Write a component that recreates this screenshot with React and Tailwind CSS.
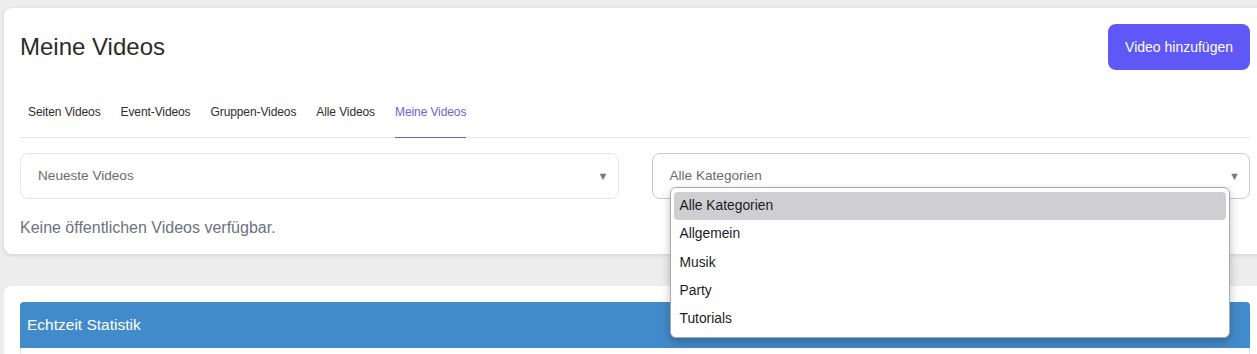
import { useState } from "react";

const tabs = ["Seiten Videos", "Event-Videos", "Gruppen-Videos", "Alle Videos", "Meine Videos"];
const categories = ["Alle Kategorien", "Allgemein", "Musik", "Party", "Tutorials"];

export default function App() {
  const [active] = useState("Meine Videos");

  return (
    <div
      className="h-[354px] bg-[#ededed] overflow-hidden pt-2 pl-1"
      style={{ fontFamily: '"Liberation Sans", Arial, sans-serif' }}
    >
      {/* Videos card */}
      <div className="w-[1262px] bg-white rounded-lg shadow-[0_1px_4px_rgba(0,0,0,0.12)] px-4 pt-4 pb-[17px]">
        {/* Header */}
        <div className="flex items-center justify-between h-[46px]">
          <h1 className="text-[24px] text-[#2b2b2b] leading-none">Meine Videos</h1>
          <button className="h-[46px] px-[17px] rounded-lg bg-[#5f58f6] text-white text-[14px]">
            Video hinzufügen
          </button>
        </div>

        {/* Tabs */}
        <div className="mt-[17px] flex gap-5 pl-2 border-b border-[#e6e6e6]">
          {tabs.map((t) => (
            <div
              key={t}
              className={
                t === active
                  ? "py-4 text-[12px] tracking-[-0.1px] leading-[18px] text-[#6a62d8] border-b border-[#6a5fcc] -mb-px"
                  : "py-4 text-[12px] tracking-[-0.1px] leading-[18px] text-[#2e2e2e]"
              }
            >
              {t}
            </div>
          ))}
        </div>

        {/* Filters */}
        <div className="mt-[15px] grid grid-cols-2 gap-[33px]">
          <div className="h-[46px] rounded-lg border border-[#e6e6e6] flex items-center justify-between pl-[17px] pr-[9px]">
            <span className="text-[13.6px] text-[#6b6b6b]">Neueste Videos</span>
            <span className="text-[11px] text-[#7a7a7a]">▼</span>
          </div>
          <div className="relative">
            <div className="h-[46px] rounded-lg border border-[#c9c9c9] flex items-center justify-between pl-[17px] pr-[9px]">
              <span className="text-[13.6px] text-[#6b6b6b]">Alle Kategorien</span>
              <span className="text-[11px] text-[#7a7a7a]">▼</span>
            </div>

            {/* Open dropdown */}
            <div className="absolute z-10 left-[18px] top-[34px] w-[560px] bg-white border border-[#a9a9a9] rounded-md shadow-[0_4px_10px_rgba(0,0,0,0.25)] px-[3px] pt-[4px] pb-[3px]">
              {categories.map((c, i) => (
                <div
                  key={c}
                  className={
                    i === 0
                      ? "h-[28.4px] flex items-center px-[6px] text-[13.8px] text-[#1c1c1c] bg-[#cfcfd2] rounded-sm"
                      : "h-[28.4px] flex items-center px-[6px] text-[13.8px] text-[#1c1c1c]"
                  }
                >
                  {c}
                </div>
              ))}
            </div>
          </div>
        </div>

        <p className="mt-[20px] text-[16px] leading-[18px] text-[#6b7280]">
          Keine öffentlichen Videos verfügbar.
        </p>
      </div>

      {/* Statistics card */}
      <div className="mt-8 w-[1262px] bg-white rounded-lg px-4 pt-4 pb-4">
        <div className="h-[46px] rounded-t bg-[#428bca] flex items-center px-[7px]">
          <span className="text-[15.5px] text-white">Echtzeit Statistik</span>
        </div>
        <div className="h-[40px] border-x border-b border-[#e3e3e3]" />
      </div>
    </div>
  );
}
